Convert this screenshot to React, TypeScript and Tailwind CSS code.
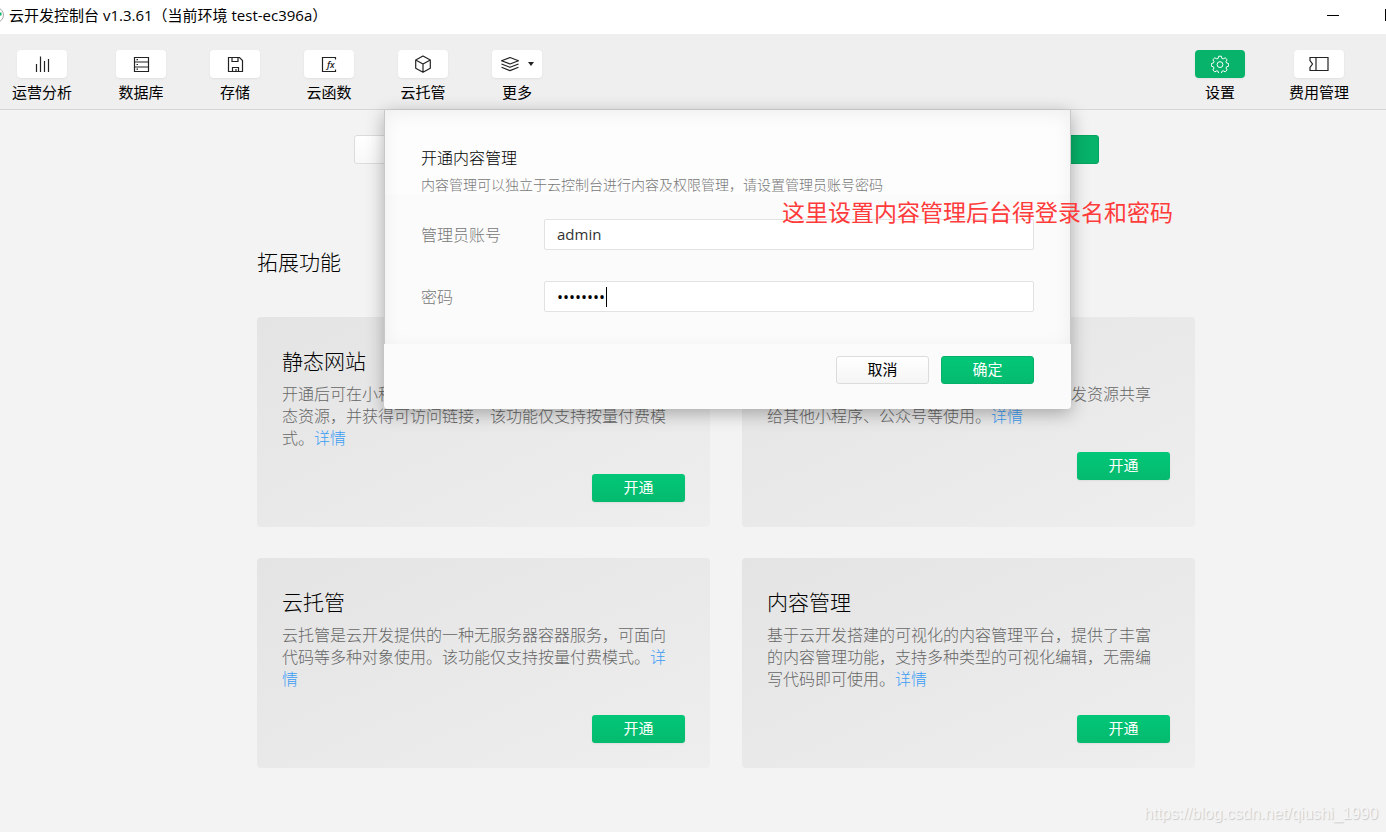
import type { FC, ReactNode } from 'react';

interface ToolItem {
  label: string;
  icon: ReactNode;
  active?: boolean;
  hasMenu?: boolean;
}

interface Feature {
  title: string;
  text: string;
}

const Icon: FC<{ children: ReactNode; wide?: boolean }> = ({ children, wide }) => (
  <svg
    className={wide ? 'h-[18px] w-5' : 'size-[18px]'}
    viewBox={wide ? '0 0 20 18' : '0 0 18 18'}
    fill="none"
    stroke="currentColor"
    strokeWidth="1.2"
    aria-hidden="true"
  >
    {children}
  </svg>
);

const mainTools: ToolItem[] = [
  {
    label: '运营分析',
    icon: (
      <Icon>
        <path d="M3.500 9v8M7.500 1.500V17M11.500 6v11M15.500 4v13" />
      </Icon>
    ),
  },
  {
    label: '数据库',
    icon: (
      <Icon>
        <path d="M2.500 2.500h14v14h-14zM2.500 7h14M2.500 12h14" />
        <path d="M4.500 4.700H6M4.500 9.500H6M4.500 14.200H6" />
      </Icon>
    ),
  },
  {
    label: '存储',
    icon: (
      <Icon>
        <path d="M2.500 2.500h11l3 3v11h-14z" />
        <path d="M6 2.500v4h6v-4M6.500 16.500v-4h6v4M10 14v2" />
      </Icon>
    ),
  },
  {
    label: '云函数',
    icon: (
      <Icon>
        <path d="M15.500 4.500v-2h-13v14h13v-2" />
        <text
          x="7"
          y="13"
          fontSize="9"
          fontStyle="italic"
          fontWeight="600"
          fontFamily="Open Sans, sans-serif"
          fill="currentColor"
          stroke="none"
        >
          fx
        </text>
      </Icon>
    ),
  },
  {
    label: '云托管',
    icon: (
      <Icon>
        <path d="M9 1l7.300 4v8.200L9 17.200l-7.300-4V5zM1.700 5L9 9l7.300-4M9 9v8.200" strokeLinejoin="round" />
      </Icon>
    ),
  },
  {
    label: '更多',
    hasMenu: true,
    icon: (
      <Icon wide>
        <path d="M10 2.500l8.500 3.200L10 9 1.500 5.700z" strokeLinejoin="round" />
        <path d="M1.500 9L10 12.300 18.500 9M1.500 12.300L10 15.600l8.500-3.300" strokeLinejoin="round" />
      </Icon>
    ),
  },
];

const sideTools: ToolItem[] = [
  {
    label: '设置',
    active: true,
    icon: (
      <Icon>
        <path
          d="M7.700 1.200h2.600l.6 2.200 1.300.5 2-1.100 1.900 1.900-1.100 2 .5 1.200 2.200.7v2.500l-2.200.7-.5 1.200 1.100 2-1.900 1.900-2-1.100-1.300.5-.6 2.200H7.700l-.6-2.200-1.300-.5-2 1.100-1.900-1.900 1.100-2-.5-1.200-2.200-.7V8.600l2.200-.7.500-1.200-1.100-2 1.900-1.900 2 1.100 1.300-.5z"
          strokeWidth="1"
          strokeLinejoin="round"
        />
        <circle cx="9" cy="9.600" r="2.900" strokeWidth="1" />
      </Icon>
    ),
  },
  {
    label: '费用管理',
    icon: (
      <Icon wide>
        <path d="M1 2.500h18v13H1v-3L3.500 9 1 5.500zM7 2.500v13" />
      </Icon>
    ),
  },
];

const tabs = ['环境设置', '全局设置', '权限设置', '拓展功能'];

const features: Feature[] = [
  {
    title: '静态网站',
    text: '开通后可在小程序云开发控制台中管理和分发网站的静态资源，并获得可访问链接，该功能仅支持按量付费模式。',
  },
  {
    title: '环境共享',
    text: '开通后可将当前小程序环境中已创建的云开发资源共享给其他小程序、公众号等使用。',
  },
  {
    title: '云托管',
    text: '云托管是云开发提供的一种无服务器容器服务，可面向代码等多种对象使用。该功能仅支持按量付费模式。',
  },
  {
    title: '内容管理',
    text: '基于云开发搭建的可视化的内容管理平台，提供了丰富的内容管理功能，支持多种类型的可视化编辑，无需编写代码即可使用。',
  },
];

const ToolButton: FC<{ item: ToolItem }> = ({ item }) => (
  <button type="button" className="flex flex-col items-center gap-1 whitespace-nowrap">
    <span
      className={`flex h-7 w-[50px] items-center justify-center gap-1 rounded shadow-sm/5 ${
        item.active ? 'bg-[#07b26a] text-white' : 'bg-white text-[#222]'
      }`}
    >
      {item.icon}
      {item.hasMenu && (
        <svg className="ml-1 h-1 w-1.5" viewBox="0 0 6 4" fill="currentColor" aria-hidden="true">
          <path d="M0 0h6L3 4z" />
        </svg>
      )}
    </span>
    <span className="text-[15px] leading-5 font-normal">{item.label}</span>
  </button>
);

const FeatureCard: FC<{ feature: Feature }> = ({ feature }) => (
  <article className="flex flex-col rounded bg-linear-to-br from-[#e4e4e4] to-[#eeeeee] px-[25px] pt-[30px] pb-[25px]">
    <h3 className="mb-2 text-[21px] leading-7">{feature.title}</h3>
    <p className="pr-2 text-base leading-[22px] text-[#666]">
      {feature.text}
      <a href="#" className="text-[#3b9df5]">详情</a>
    </p>
    <button
      type="button"
      className="mt-[25px] h-7 w-[93px] self-end rounded-[3px] bg-linear-to-b from-[#02c778] to-[#05ba6e] pb-0.5 text-[15px] leading-6 font-normal text-white shadow-sm/5"
    >
      开通
    </button>
  </article>
);

const fieldClass =
  'h-[31px] w-full rounded-[2px] border border-[#e2e2e2] bg-white px-3 font-normal outline-none';

const SetupDialog: FC = () => (
  <form
    role="dialog"
    aria-labelledby="dialog-title"
    className="absolute top-0 right-[124px] left-[127px] rounded-b bg-[#fbfbfb] shadow-[0_4px_18px_rgba(0,0,0,0.3)]"
  >
    <div className="border-x border-[#c8c8c8] bg-[linear-gradient(#fdfdfd_84px,#fbfbfb_84px)] px-9 pt-9 pb-8 shadow-[inset_0_4px_18px_rgba(0,0,0,0.06)]">
      <h2 id="dialog-title" className="text-base leading-6">开通内容管理</h2>
      <p className="mt-1 text-sm leading-[22px] text-[#777]">
        内容管理可以独立于云控制台进行内容及权限管理，请设置管理员账号密码
      </p>
      <div className="mt-[23px] grid grid-cols-[123px_1fr] items-center gap-y-[31px]">
        <label htmlFor="account" className="text-base text-[#777]">管理员账号</label>
        <input
          id="account"
          type="text"
          defaultValue="admin"
          className={`${fieldClass} pb-0.5 text-[15px] text-[#333]`}
        />
        <label htmlFor="password" className="text-base text-[#777]">密码</label>
        <div className="relative">
          <input
            id="password"
            type="password"
            defaultValue="12345678"
            className={`${fieldClass} text-base text-black`}
          />
          <span className="absolute top-1.5 left-[62px] h-5 w-px bg-black" />
        </div>
      </div>
    </div>
    <div className="flex justify-end gap-3 px-[37px] pt-3 pb-[25px] text-[15px] leading-6 font-normal">
      <button
        type="button"
        className="h-7 w-[93px] rounded-[3px] border border-[#dcdcdc] bg-linear-to-b from-white to-[#f5f5f5] pb-0.5"
      >
        取消
      </button>
      <button
        type="button"
        className="h-7 w-[93px] rounded-[3px] border border-[#05b069] bg-linear-to-b from-[#02c778] to-[#05ba6e] pb-0.5 text-white"
      >
        确定
      </button>
    </div>
  </form>
);

export default function App() {
  return (
    <div className="relative flex min-h-screen flex-col overflow-hidden bg-[#f3f3f3] font-['Open_Sans','Noto_Sans_CJK_SC',sans-serif] font-light text-black">
      <header className="flex h-[34px] items-center justify-between bg-white pb-1">
        <div className="flex items-center">
          <svg className="h-4 w-[9px]" viewBox="0 0 9 16" fill="none" aria-hidden="true">
            <circle cx="-4" cy="8" r="7.500" stroke="#aaa" />
            <path d="M0 5.500h1.500v3H0z" fill="#07b26a" />
          </svg>
          <h1 className="text-[15px] leading-5 font-normal">云开发控制台 v1.3.61（当前环境 test-ec396a）</h1>
        </div>
        <div className="flex items-center gap-[46px]">
          <button type="button" aria-label="最小化" className="h-px w-3 bg-black" />
          <button type="button" aria-label="最大化" className="h-3 w-px bg-black" />
        </div>
      </header>

      <nav className="flex h-[76px] items-start justify-between border-b border-[#d6d6d6] bg-[#efefef] pt-4 pr-[37px] pl-3">
        <div className="flex gap-11">
          {mainTools.map((item) => (
            <ToolButton key={item.label} item={item} />
          ))}
        </div>
        <div className="flex gap-11">
          {sideTools.map((item) => (
            <ToolButton key={item.label} item={item} />
          ))}
        </div>
      </nav>

      <main className="flex-1 pr-[191px] pl-[257px]">
        <div className="relative pt-[25px] pb-16">
          <div className="mx-auto flex h-[29px] w-full max-w-[745px]">
            {tabs.map((tab) => (
              <button
                key={tab}
                type="button"
                className={`flex-1 border text-[15px] first:rounded-l-[3px] last:rounded-r-[3px] ${
                  tab === '拓展功能'
                    ? 'border-[#05a561] bg-[#07b26a] text-white'
                    : 'border-[#dcdcdc] bg-linear-to-b from-white to-[#f8f8f8]'
                }`}
              >
                {tab}
              </button>
            ))}
          </div>

          <h2 className="mt-[84px] mb-[41px] text-[21px] leading-7">拓展功能</h2>

          <div className="grid grid-cols-2 gap-x-8 gap-y-[31px]">
            {features.map((feature) => (
              <FeatureCard key={feature.title} feature={feature} />
            ))}
          </div>

          <SetupDialog />

          <p className="absolute top-[86px] left-[525px] text-[23px] leading-8 font-normal whitespace-nowrap text-[#ff3b3b]">
            这里设置内容管理后台得登录名和密码
          </p>
        </div>
      </main>

      <p className="absolute right-2 bottom-1.5 font-['Liberation_Sans',sans-serif] text-base leading-6 font-normal text-[#f6f6f6] text-shadow-[1px_1px_1px_#c9c9c9]">
        https://blog.csdn.net/qiushi_1990
      </p>
    </div>
  );
}
